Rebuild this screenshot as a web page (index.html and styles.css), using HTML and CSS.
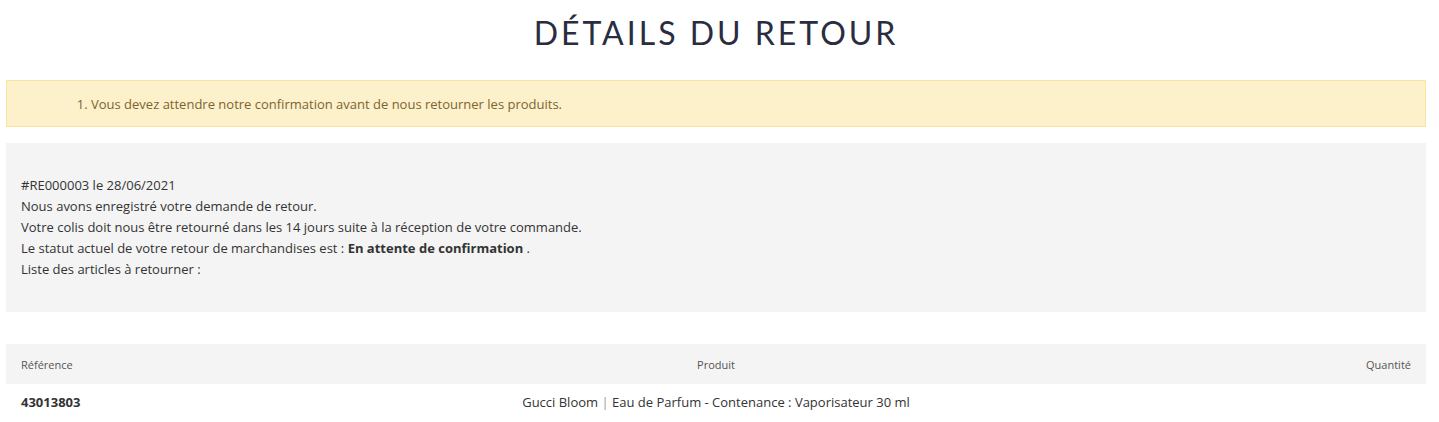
FILE: index.html
```html
<!DOCTYPE html>
<html lang="fr">
<head>
    <meta charset="UTF-8">
    <title>Détails du retour</title>
    <link rel="stylesheet" href="styles.css">
</head>
<body>

<div class="page">
    <h1 class="page-title">Détails du retour</h1>

    <!-- avertissement -->
    <div class="alert-warning">
        <ol>
            <li>Vous devez attendre notre confirmation avant de nous retourner les produits.</li>
        </ol>
    </div>

    <div class="return-info">
        <p>#RE000003 le 28/06/2021</p>
        <p>Nous avons enregistré votre demande de retour.</p>
        <p>Votre colis doit nous être retourné dans les 14 jours suite à la réception de votre commande.</p>
        <p>Le statut actuel de votre retour de marchandises est : <strong>En attente de confirmation</strong> .</p>
        <p>Liste des articles à retourner :</p>
    </div>

    <table class="return-table">
        <tr>
            <th class="col-ref">Référence</th>
            <th class="col-product">Produit</th>
            <th class="col-qty">Quantité</th>
        </tr>
        <tr>
            <td class="col-ref"><strong>43013803</strong></td>
            <td class="col-product">Gucci Bloom <span class="sep">|</span> Eau de Parfum - Contenance : Vaporisateur 30 ml</td>
            <td class="col-qty"></td>
        </tr>
    </table>
</div>

</body>
</html>
```

FILE: styles.css
```css
body {
    margin: 0;
    font-family: "Open Sans", "Liberation Sans", sans-serif;
    color: #333;
    background-color: white;
}
.page {
    padding: 0 13px 0 6px;
}
.page-title {
    margin: 0;
    padding-top: 13px;
    height: 80px;
    box-sizing: border-box;
    text-align: center;
    font-family: "Lato", "Liberation Sans", sans-serif;
    font-weight: 400;
    font-size: 32px;
    letter-spacing: 3px;
    text-transform: uppercase;
    color: #2a2d3f;
    line-height: 40px;
}
.alert-warning {
    background-color: #fcf1cb;
    border: 1px solid #f8e4a3;
    color: #7c6430;
    font-size: 13px;
    height: 47px;
    box-sizing: border-box;
    display: flex;
    align-items: center;
}
.alert-warning ol {
    margin: 0;
    padding-left: 84px;
}
.return-info {
    margin-top: 16px;
    background-color: #f4f4f4;
    padding: 32px 15px 32px;
    font-size: 13px;
    line-height: 21px;
}
.return-info p {
    margin: 0;
}
.return-table {
    width: 100%;
    margin-top: 32px;
    border-collapse: collapse;
    table-layout: fixed;
    font-size: 13px;
}
.return-table th {
    background-color: #f4f4f4;
    font-weight: 400;
    font-size: 11px;
    color: #555;
    height: 40px;
    padding: 0 15px;
}
.return-table td {
    height: 36px;
    padding: 0 15px;
}
.sep {
    color: #999;
}
.col-ref {
    width: 20%;
    text-align: left;
}
.col-product {
    text-align: center;
}
.col-qty {
    width: 20%;
    text-align: right;
}
```
